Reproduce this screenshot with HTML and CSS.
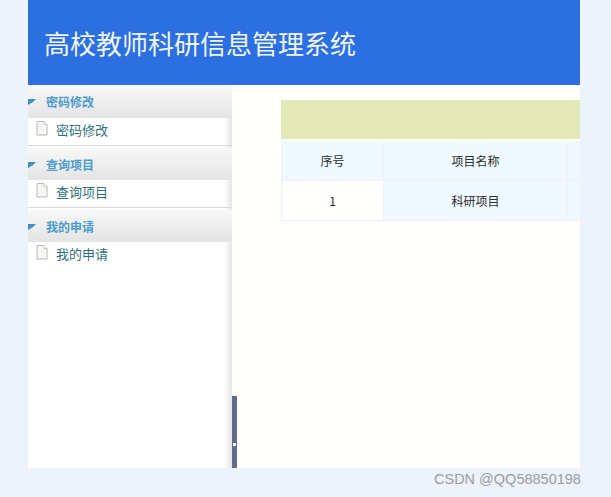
FILE: index.html
```html
<!DOCTYPE html>
<html lang="zh">
<head>
<meta charset="utf-8">
<title>高校教师科研信息管理系统</title>
<link rel="stylesheet" href="styles.css">
</head>
<body>
<div class="app">
  <header class="top"><h1>高校教师科研信息管理系统</h1></header>
  <div class="body">
    <aside class="side">
      <section class="group">
        <div class="head"><i class="arrow"></i><span>密码修改</span></div>
        <div class="item"><svg class="doc" viewBox="0 0 12 15"><path d="M1 .5h7l3 3v10.500H1z" fill="#f6f6f4" stroke="#b9b9b5"/><path d="M8 .5v3h3" fill="#fff" stroke="#c8c8c4"/></svg><span>密码修改</span></div>
      </section>
      <section class="group">
        <div class="head"><i class="arrow"></i><span>查询项目</span></div>
        <div class="item"><svg class="doc" viewBox="0 0 12 15"><path d="M1 .5h7l3 3v10.500H1z" fill="#f6f6f4" stroke="#b9b9b5"/><path d="M8 .5v3h3" fill="#fff" stroke="#c8c8c4"/></svg><span>查询项目</span></div>
      </section>
      <section class="group last">
        <div class="head"><i class="arrow"></i><span>我的申请</span></div>
        <div class="item"><svg class="doc" viewBox="0 0 12 15"><path d="M1 .5h7l3 3v10.500H1z" fill="#f6f6f4" stroke="#b9b9b5"/><path d="M8 .5v3h3" fill="#fff" stroke="#c8c8c4"/></svg><span>我的申请</span></div>
      </section>
    </aside>
    <div class="split"><div class="bar"><b class="dot"></b></div></div>
    <main class="main">
      <div class="banner"></div>
      <div class="table">
        <div class="row">
          <div class="cell c1 tint">序号</div>
          <div class="cell c2 tint">项目名称</div>
          <div class="cell c3 tint"></div>
        </div>
        <div class="row">
          <div class="cell c1">1</div>
          <div class="cell c2 tint">科研项目</div>
          <div class="cell c3 tint"></div>
        </div>
      </div>
    </main>
  </div>
</div>
<div class="mark">CSDN @QQ58850198</div>
</body>
</html>
```
FILE: styles.css
```css
* { box-sizing: border-box; }
html, body { margin: 0; height: 100%; overflow: hidden; }
body {
  background: #edf2fb;
  font-family: "Noto Sans CJK SC", "Liberation Sans", sans-serif;
  position: relative;
}
.app {
  margin-left: 28px;
  width: 552px;
  height: 468px;
  background: #fffffd;
  display: flex;
  flex-direction: column;
  overflow: hidden;
}
.top {
  height: 85px;
  flex: none;
  background: #2b6fe0;
  display: flex;
  align-items: center;
  padding-left: 16px;
}
.top h1 {
  margin: 0;
  font-size: 26px;
  font-weight: 400;
  color: #f0f5fd;
  line-height: 1;
  position: relative;
  letter-spacing: 0;
}
.body { flex: 1; display: flex; min-height: 0; }
.side {
  width: 204px;
  flex: none;
  background: linear-gradient(to right, #fff 196px, #e6e6e4 204px);
}
.group { margin-bottom: 2px; }
.head {
  height: 33px;
  display: flex;
  align-items: center;
  background: linear-gradient(to bottom, #f8f8f8, #e4e4e4);
  font-size: 12px;
  font-weight: 700;
  color: #4a9bcb;
}
.group + .group .head { height: 32px; }
.arrow {
  width: 0;
  height: 0;
  margin: 1px 10px 0 0;
  border-style: solid;
  border-width: 3px 3px 3px 5px;
  border-color: #3f8fc4 transparent transparent #3f8fc4;
  flex: none;
}
.item {
  height: 28px;
  display: flex;
  align-items: flex-start;
  padding: 3px 0 0 8px;
  font-size: 13px;
  line-height: 18px;
  color: #2f6f78;
  border-bottom: 1px solid #d8d8d6;
}
.last .item { border-bottom: 0; }
.doc { width: 12px; height: 15px; margin-right: 8px; flex: none; }
.split {
  width: 5px;
  flex: none;
  display: flex;
  flex-direction: column;
  justify-content: flex-end;
}
.bar {
  height: 72px;
  width: 5px;
  background: #636b8c;
  position: relative;
}
.dot {
  position: absolute;
  left: 1px;
  top: 47px;
  width: 3px;
  height: 3px;
  background: #f4f5f8;
}
.main { flex: 1; min-width: 0; padding: 15px 0 0 44px; overflow: hidden; }
.banner { height: 39px; width: 700px; background: #e2e9b7; margin-bottom: 2px; }
.table { width: 700px; }
.row { display: flex; height: 40px; border-bottom: 1px solid #edf1f3; }
.cell {
  display: flex;
  align-items: center;
  justify-content: center;
  font-size: 12px;
  color: #2b2b2b;
  border-right: 1px solid #f0f3f4;
}
.c1 { width: 103px; border-left: 1px solid #f0f3f4; }
.c2 { width: 184px; }
.c3 { flex: 1; }
.tint { background: #eff9ff; }
.mark {
  position: absolute;
  left: 434px;
  top: 470px;
  font-family: "Liberation Sans", sans-serif;
  font-size: 14.500px;
  line-height: 18px;
  color: #9a9ca3;
  white-space: nowrap;
}
```
